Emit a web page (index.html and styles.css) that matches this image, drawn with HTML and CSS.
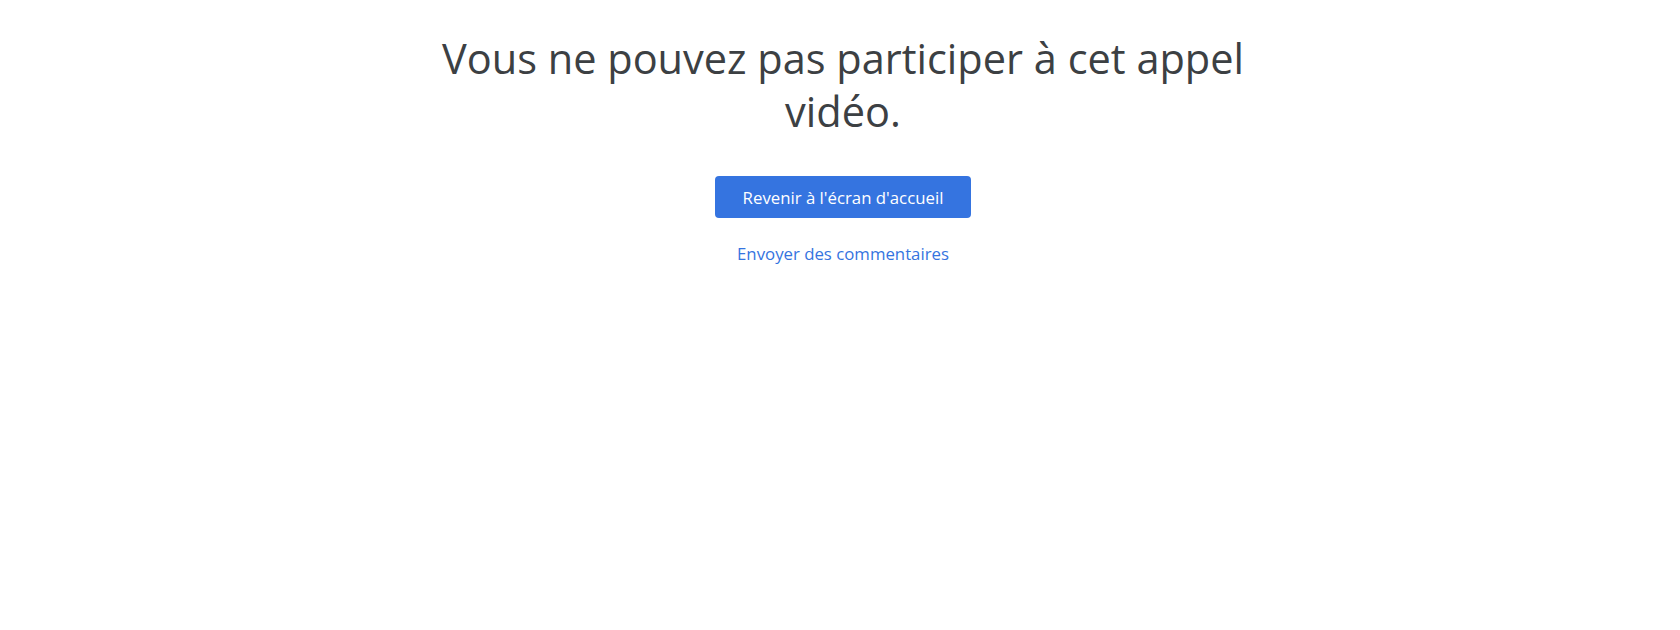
FILE: index.html
```html
<!DOCTYPE html>
<html lang="fr">
<head>
<meta charset="utf-8">
<title>Google Meet</title>
<link rel="stylesheet" href="styles.css">
</head>
<body>
<main class="page">
  <h1 class="title">Vous ne pouvez pas participer à cet appel vidéo.</h1>
  <button class="primary">Revenir à l'écran d'accueil</button>
  <a class="link" href="#">Envoyer des commentaires</a>
</main>
</body>
</html>
```

FILE: styles.css
```css
html, body {
  margin: 0;
  padding: 0;
  background: #ffffff;
}
body {
  font-family: "Open Sans", "Roboto", sans-serif;
  color: #3c4043;
}
.page {
  display: flex;
  flex-direction: column;
  align-items: center;
  padding-top: 32px;
  padding-left: 6px;
}
.title {
  margin: 0;
  max-width: 820px;
  text-align: center;
  font-weight: 400;
  font-size: 41.5px;
  line-height: 53px;
  color: #3c4043;
}
.primary {
  margin-top: 38px;
  height: 42px;
  padding: 0 28px;
  border: none;
  border-radius: 4px;
  background: #3574e0;
  color: #ffffff;
  font-family: "Open Sans", sans-serif;
  font-size: 16.8px;
  font-weight: 500;
}
.link {
  margin-top: 24px;
  line-height: 24px;
  color: #3574e0;
  text-decoration: none;
  font-family: "Open Sans", sans-serif;
  font-size: 16.8px;
  font-weight: 500;
}
```
